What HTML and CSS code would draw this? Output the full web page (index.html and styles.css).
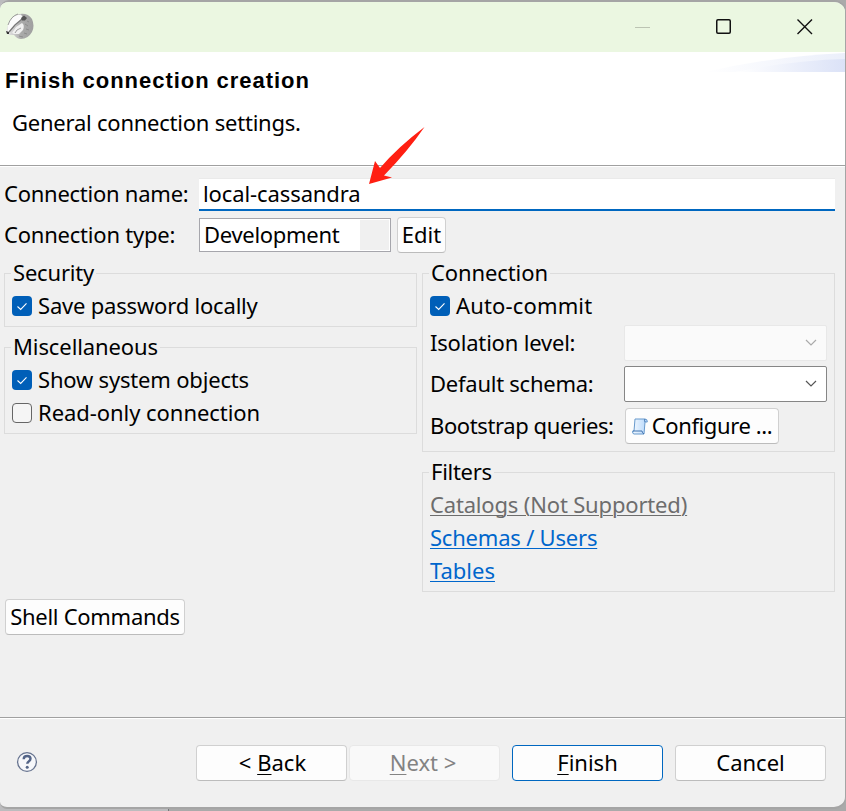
FILE: index.html
```html
<!DOCTYPE html>
<html lang="en">
<head>
<meta charset="utf-8">
<title>Finish connection creation</title>
<link rel="stylesheet" href="styles.css">
</head>
<body>
<main class="window">
  <div class="titlebar">
    <svg class="logo" width="28" height="28" viewBox="0 0 28 28">
      <defs><linearGradient id="fur" x1="0" x2="1"><stop offset="0" stop-color="#eee"/><stop offset=".55" stop-color="#aaa"/><stop offset="1" stop-color="#a0a0a0"/></linearGradient></defs>
      <path d="M2 12Q5 2 14 1Q22 0 26 6Q29 13 26 19Q22 26 15 26Q11 26 8 22L3 22L0 18Z" fill="url(#fur)"/>
      <path d="M2 12Q5 2 15 1.5L17 5L9 13L2 19Z" fill="#fbfbfb"/>
      <path d="M6 20L10 14L16 10Q19 12 17 17L13 21L8 21Z" fill="#f0f0f0"/>
      <path d="M3 19L9 12L16 6" fill="none" stroke="#777" stroke-width="1.3"/>
      <path d="M9 20L11 17L15 15M2 12Q5 3 12 1" fill="none" stroke="#888" stroke-width=".8"/>
      <path d="M15 5L18 2.5L21 5L19 7.5L16 7.5Z" fill="#555"/>
      <path d="M0 18l3 1v2l-2 0z" fill="#333"/>
      <path d="M19 11l3 2M20 16l3 1M18 20l3 1M21 8l2 1M13 23l4 1" stroke="#858585" stroke-width=".8"/>
    </svg>
    <svg class="control" width="16" height="16"><path d="M0 8.5H15" stroke="#bcc4b3"/></svg>
    <svg class="control" width="16" height="16"><rect x=".75" y=".75" width="13.5" height="13.5" rx="1.2" fill="none" stroke="#111" stroke-width="1.5"/></svg>
    <svg class="control" width="16" height="16"><path d="M.5.5L15 15M15 .5L.5 15" stroke="#111" stroke-width="1.4"/></svg>
  </div>
  <header class="header">
    <h1><span class="t-head">Finish connection creation</span></h1>
    <p><span class="t-sub">General connection settings.</span></p>
    <svg class="swoosh" width="140" height="20" viewBox="0 0 140 20">
      <defs><linearGradient id="sky"><stop offset="0" stop-color="#fff"/><stop offset="1" stop-color="#dbe2f7"/></linearGradient></defs>
      <path d="M0 20Q70 4 140 1V20Z" fill="url(#sky)" opacity=".55"/>
      <path d="M30 20Q90 8 140 7V20Z" fill="url(#sky)"/>
    </svg>
  </header>
  <div class="content">
    <div class="field name-row"><label class="label"><span class="t-name">Connection name:</span></label><div class="input"><span class="t-local">local-cassandra</span></div></div>
    <div class="field type-row"><label class="label"><span class="t-type">Connection type:</span></label><div class="type"><span class="t-dev">Development</span><i></i></div><button class="edit"><span class="t-edit">Edit</span></button></div>
    <div class="columns">
      <div class="column">
        <fieldset>
          <legend><span class="t-security">Security</span></legend>
          <label class="row"><svg class="box" viewBox="0 0 20 20"><path d="M5.5 10.5L8.7 13.5L14.5 7.3"/></svg><span class="t-save">Save password locally</span></label>
        </fieldset>
        <fieldset>
          <legend><span class="t-misc">Miscellaneous</span></legend>
          <label class="row"><svg class="box" viewBox="0 0 20 20"><path d="M5.5 10.5L8.7 13.5L14.5 7.3"/></svg><span class="t-show">Show system objects</span></label>
          <label class="row"><i class="box empty"></i><span class="t-read">Read-only connection</span></label>
        </fieldset>
      </div>
      <div class="column">
        <fieldset>
          <legend><span class="t-conn">Connection</span></legend>
          <label class="row"><svg class="box" viewBox="0 0 20 20"><path d="M5.5 10.5L8.7 13.5L14.5 7.3"/></svg><span class="t-auto">Auto-commit</span></label>
          <div class="option isolation"><span class="option-label"><span class="t-iso">Isolation level:</span></span><div class="combo disabled"><svg width="12" height="8"><path d="M1 1L6 6L11 1"/></svg></div></div>
          <div class="option schema"><span class="option-label"><span class="t-schema">Default schema:</span></span><div class="combo"><svg width="12" height="8"><path d="M1 1L6 6L11 1"/></svg></div></div>
          <div class="option bootstrap"><span class="option-label"><span class="t-boot">Bootstrap queries:</span></span><button class="configure">
            <svg width="16" height="17" viewBox="0 0 16 17"><defs><linearGradient id="page"><stop offset="0" stop-color="#f3f9ff"/><stop offset="1" stop-color="#b4d6fb"/></linearGradient></defs><path d="M3 1H13Q15.5 1 15.3 4H13L12 16H2Q.3 16 .6 13H2Z" fill="url(#page)" stroke="#6799cc"/><path d="M13 1Q12 2 13 4M1 13H10Q10 15 12 16" fill="none" stroke="#3f72ae"/></svg>
            <span class="t-config">Configure ...</span></button></div>
        </fieldset>
        <fieldset>
          <legend><span class="t-filters">Filters</span></legend>
          <div class="row"><a class="muted t-cat">Catalogs (Not Supported)</a></div>
          <div class="row"><a class="t-users">Schemas / Users</a></div>
          <div class="row"><a class="t-tables">Tables</a></div>
        </fieldset>
      </div>
    </div>
    <button class="shell"><span class="t-shell">Shell Commands</span></button>
  </div>
  <footer class="footer">
    <svg class="help" width="22" height="22" viewBox="0 0 22 22"><circle cx="11" cy="11" r="9.4" fill="#f6f7fa" stroke="#66738f" stroke-width="1.3"/><path d="M7.7 8.2Q7.7 5 11.2 5Q14.5 5 14.5 7.8Q14.5 9.2 12.7 10.4Q11.3 11.3 11.3 12.8" fill="none" stroke="#536487" stroke-width="2.4"/><circle cx="11.2" cy="16.2" r="1.5" fill="#536487"/></svg>
    <button class="nav back"><span class="t-back">&lt; <u>B</u>ack</span></button>
    <button class="nav off"><span class="t-next"><u>N</u>ext &gt;</span></button>
    <button class="nav primary"><span class="t-finish"><u>F</u>inish</span></button>
    <button class="nav cancel"><span class="t-cancel">Cancel</span></button>
  </footer>
  <svg class="arrow" width="58" height="60" viewBox="368 126 58 60"><path d="M369 184L375 161L380 168Q398 147 424.5 127Q408 151 384 175.5L392 177.5Z" fill="#ff1f12"/></svg>
</main>
</body>
</html>
```
FILE: styles.css
```css
* { box-sizing: border-box; }
body { margin: 0; width: 846px; height: 811px; overflow: hidden; background: linear-gradient(90deg, #bcbcbe 168px, #77777b 168px, #77777b 169px, #aaa 169px); font: 22px/32px "Noto Sans", sans-serif; color: #000; }
.window { position: relative; width: 846px; height: 809px; border: solid #a5a5a5; border-width: 2px 1px 2px 0; border-radius: 9px 12px 12px 7px; background: #f0f0f0; overflow: hidden; display: flex; flex-direction: column; }
span, a { white-space: nowrap; }
.titlebar { height: 50px; flex: none; background: #ebf7e1; display: flex; align-items: center; padding: 0 32px 0 6px; }
.logo { margin-right: auto; }
.control + .control { margin-left: 65px; }
.header { position: relative; height: 114px; flex: none; background: #fff; border-bottom: 1px solid #a0a0a0; padding: 13px 0 0 5px; box-shadow: 0 1px #fff; }
.header h1 { margin: 0; font: bold 22px/32px "Liberation Sans", sans-serif; }
.header p { margin: 9px 0 0 7px; }
.swoosh { position: absolute; top: 0; right: 0; }
.content { flex: 1; padding: 12px 10px 0 4px; }
.field { display: flex; }
.label { width: 195px; line-height: 30px; }
.input { width: 636px; height: 33px; background: #fff; border-bottom: 2px solid #0067c0; border-top: 1px solid #eaeaea; padding-left: 4px; line-height: 28px; }
.type-row { margin-top: 7px; height: 34px; }
.type-row .label { line-height: 32px; }
.type { width: 192px; height: 34px; border: 1px solid #a6a6ac; background: #fff; display: flex; justify-content: space-between; padding: 0 1px 1px 4px; line-height: 30px; }
.type i { width: 29px; background: #f0f0f0; margin-top: 1px; }
button { font: inherit; color: inherit; background: #fdfdfd; border: 1px solid #d0d0d0; border-bottom-color: #bcbcbc; border-radius: 4px; height: 36px; padding: 0 0 2px; display: flex; align-items: center; justify-content: center; }
.edit { width: 49px; margin: -1px 0 0 6px; }
.columns { display: flex; gap: 5px; margin-top: 5px; height: 335px; }
.column { width: 413px; display: flex; flex-direction: column; gap: 4px; }
fieldset { margin: 0; padding: 0 7px 4px; border: 1px solid #dcdcdc; min-width: 0; }
legend { margin-left: -1px; padding: 0 2px; height: 32px; line-height: 30px; }
.row { height: 33px; display: flex; align-items: center; gap: 6px; }
.row span, .row a, .option-label { padding-bottom: 2px; }
.box { width: 20px; height: 20px; border-radius: 4px; background: #005fb8; flex: none; fill: none; stroke: #fff; stroke-width: 1.1; }
.empty { background: #f5f5f5; border: 1px solid #666; }
.option { display: flex; height: 36px; align-items: center; }
.isolation { margin-top: 3px; }
.schema { margin-top: 5px; }
.bootstrap { margin: 6px 0 3px; }
.option-label { width: 194px; }
.combo { width: 203px; height: 36px; border: 1px solid #868686; border-radius: 2px; background: #fff; display: flex; justify-content: flex-end; align-items: center; padding-right: 9px; }
.combo svg { fill: none; stroke: #555; stroke-width: 1.2; }
.combo.disabled { background: #fafafa; border-color: #e8e8e8; }
.combo.disabled svg { stroke: #aaa; }
.configure { width: 154px; margin-left: 1px; gap: 4px; }
.configure svg { margin-top: 2px; }
.row a { color: #0066cc; text-decoration: underline; text-decoration-thickness: 1px; text-underline-offset: 2px; }
.row a.muted { color: #6d6d6d; }
.shell { width: 180px; margin: 7px 0 0 1px; }
.footer { height: 90px; flex: none; border-top: 1px solid #a0a0a0; box-shadow: inset 0 1px #fff; display: flex; align-items: center; padding-left: 16px; }
.help { margin: 0 158px 2px 0; }
.nav { width: 151px; margin-right: 2px; }
.nav u { text-decoration-thickness: 1px; text-underline-offset: 3px; }
.back { padding-left: 2px; }
.off { background: #f9f9f9; border-color: #e8e8e8; color: #838383; margin-right: 12px; padding-right: 3px; }
.primary { border-color: #0067c0; margin-right: 12px; }
.arrow { position: absolute; left: 368px; top: 124px; }

/* Tracking per caption */
.t-head { letter-spacing: .96px; }
.t-sub { letter-spacing: -.23px; }
.t-name, .t-schema { letter-spacing: -.25px; }
.t-type, .t-users { letter-spacing: -.21px; }
.t-local, .t-misc, .t-conn { letter-spacing: -.1px; }
.t-dev { letter-spacing: -.3px; }
.t-security, .t-save, .t-show, .t-iso { letter-spacing: -.19px; }
.t-read { letter-spacing: -.05px; }
.t-auto { letter-spacing: .15px; }
.t-boot, .t-config { letter-spacing: -.4px; }
.t-filters, .t-shell { letter-spacing: -.28px; }
.t-cat { letter-spacing: -.17px; }
```
